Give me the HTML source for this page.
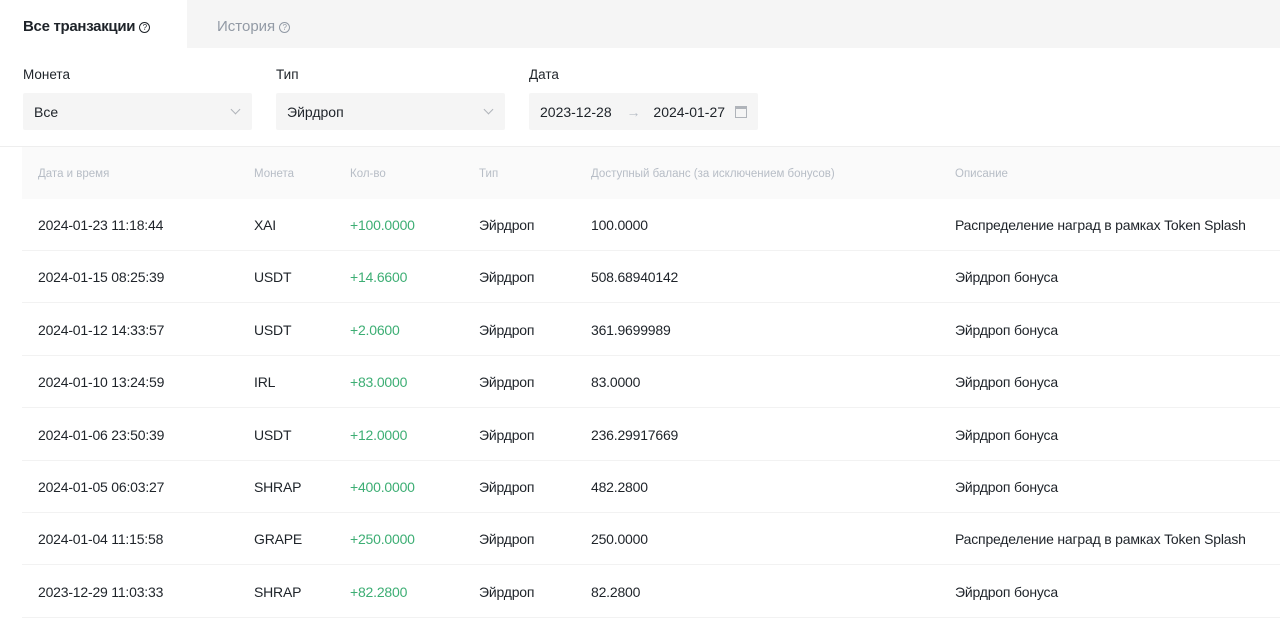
<!DOCTYPE html>
<html><head><meta charset="utf-8"><style>
*{margin:0;padding:0;box-sizing:border-box}
body{width:1280px;height:619px;overflow:hidden;background:#fff;font-family:"Liberation Sans",sans-serif;color:#1e2329;position:relative}
.a{position:absolute;white-space:nowrap}
.tabs{position:absolute;left:0;top:0;width:1280px;height:48px;background:#f5f5f5}
.tab1{position:absolute;left:0;top:0;width:187px;height:48px;background:#fff}
.q{display:inline-block;width:11px;height:11px;border:1px solid currentColor;border-radius:50%;font-size:8px;line-height:9px;text-align:center;vertical-align:1px;margin-left:4px}
.lbl{font-size:13.5px;color:#1e2329;top:67px}
.box{position:absolute;top:93px;height:37px;background:#f5f5f5;border-radius:2px;font-size:14px;line-height:38px;padding-left:11px}
.chev{position:absolute;top:13px;width:7px;height:7px;border-right:1px solid #b0b4ba;border-bottom:1px solid #b0b4ba;transform:rotate(45deg)}
.hdr{position:absolute;left:22px;top:147px;width:1258px;height:52px;background:#fafafa}
.h{font-size:11.5px;color:#b7bdc6;top:168px}
.row{position:absolute;left:22px;width:1258px;height:52px;border-bottom:1px solid #f2f2f2}
.c{position:absolute;top:18px;font-size:14px;letter-spacing:-0.2px;color:#1e2329}
.g{color:#3dae74}
</style></head><body>
<div class="tabs"><div class="tab1"></div></div>
<div class="a" style="left:23px;top:18px;font-size:15px;font-weight:bold;letter-spacing:-0.3px">Все транзакции<span class="q" style="font-weight:normal">?</span></div>
<div class="a" style="left:217px;top:18px;font-size:15px;color:#929aa5">История<span class="q">?</span></div>
<div class="a lbl" style="left:23px">Монета</div>
<div class="a lbl" style="left:276px">Тип</div>
<div class="a lbl" style="left:529px">Дата</div>
<div class="box" style="left:23px;width:229px">Все<div class="chev" style="left:209px"></div></div>
<div class="box" style="left:276px;width:229px">Эйрдроп<div class="chev" style="left:209px"></div></div>
<div class="box" style="left:529px;width:229px">2023-12-28 <span style="color:#b7bdc6;margin:0 9px 0 11px">→</span> 2024-01-27
<div style="position:absolute;left:206px;top:13px;width:12px;height:12px;border:1px solid #b0b4ba;border-top-width:3px"></div></div>
<div class="a" style="left:0;top:146px;width:1280px;height:1px;background:#eee"></div>
<div class="hdr"></div>
<div class="a h" style="left:38px">Дата и время</div>
<div class="a h" style="left:254px">Монета</div>
<div class="a h" style="left:350px">Кол-во</div>
<div class="a h" style="left:479px">Тип</div>
<div class="a h" style="left:591px">Доступный баланс (за исключением бонусов)</div>
<div class="a h" style="left:955px">Описание</div>

<div class="row" style="top:199px"><span class="c" style="left:16px">2024-01-23 11:18:44</span><span class="c" style="left:232px">XAI</span><span class="c g" style="left:328px">+100.0000</span><span class="c" style="left:457px">Эйрдроп</span><span class="c" style="left:569px">100.0000</span><span class="c" style="left:933px">Распределение наград в рамках Token Splash</span></div>
<div class="row" style="top:251px"><span class="c" style="left:16px">2024-01-15 08:25:39</span><span class="c" style="left:232px">USDT</span><span class="c g" style="left:328px">+14.6600</span><span class="c" style="left:457px">Эйрдроп</span><span class="c" style="left:569px">508.68940142</span><span class="c" style="left:933px">Эйрдроп бонуса</span></div>
<div class="row" style="top:304px"><span class="c" style="left:16px">2024-01-12 14:33:57</span><span class="c" style="left:232px">USDT</span><span class="c g" style="left:328px">+2.0600</span><span class="c" style="left:457px">Эйрдроп</span><span class="c" style="left:569px">361.9699989</span><span class="c" style="left:933px">Эйрдроп бонуса</span></div>
<div class="row" style="top:356px"><span class="c" style="left:16px">2024-01-10 13:24:59</span><span class="c" style="left:232px">IRL</span><span class="c g" style="left:328px">+83.0000</span><span class="c" style="left:457px">Эйрдроп</span><span class="c" style="left:569px">83.0000</span><span class="c" style="left:933px">Эйрдроп бонуса</span></div>
<div class="row" style="top:409px"><span class="c" style="left:16px">2024-01-06 23:50:39</span><span class="c" style="left:232px">USDT</span><span class="c g" style="left:328px">+12.0000</span><span class="c" style="left:457px">Эйрдроп</span><span class="c" style="left:569px">236.29917669</span><span class="c" style="left:933px">Эйрдроп бонуса</span></div>
<div class="row" style="top:461px"><span class="c" style="left:16px">2024-01-05 06:03:27</span><span class="c" style="left:232px">SHRAP</span><span class="c g" style="left:328px">+400.0000</span><span class="c" style="left:457px">Эйрдроп</span><span class="c" style="left:569px">482.2800</span><span class="c" style="left:933px">Эйрдроп бонуса</span></div>
<div class="row" style="top:513px"><span class="c" style="left:16px">2024-01-04 11:15:58</span><span class="c" style="left:232px">GRAPE</span><span class="c g" style="left:328px">+250.0000</span><span class="c" style="left:457px">Эйрдроп</span><span class="c" style="left:569px">250.0000</span><span class="c" style="left:933px">Распределение наград в рамках Token Splash</span></div>
<div class="row" style="top:566px"><span class="c" style="left:16px">2023-12-29 11:03:33</span><span class="c" style="left:232px">SHRAP</span><span class="c g" style="left:328px">+82.2800</span><span class="c" style="left:457px">Эйрдроп</span><span class="c" style="left:569px">82.2800</span><span class="c" style="left:933px">Эйрдроп бонуса</span></div>
</body></html>
